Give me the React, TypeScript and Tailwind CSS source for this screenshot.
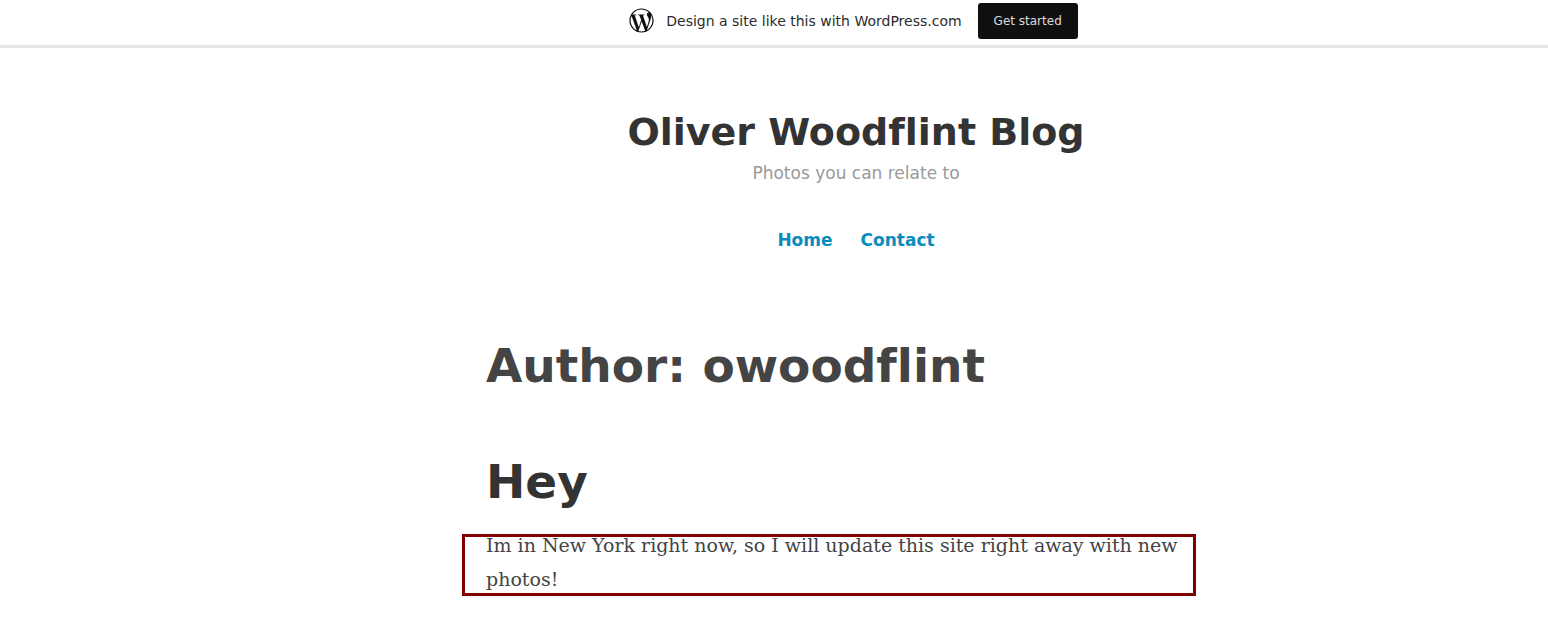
import { FaWordpressSimple } from "react-icons/fa";

export default function App() {
  return (
    <div className="min-h-screen bg-white font-['DejaVu_Sans',sans-serif] text-[#444] [font-variant-ligatures:none]">
      <aside className="flex h-12 items-center justify-center gap-4 border-b-3 border-[#e6e6e6] pb-1 pl-[159px] text-[#2b2b2b]">
        <span className="flex items-center gap-3 text-sm">
          <FaWordpressSimple className="size-[25px] text-[#101010]" />
          Design a site like this with WordPress.com
        </span>
        <a href="#start" className="flex h-9 items-center rounded-[3px] bg-[#101010] px-4 text-xs text-[#ddd]">Get started</a>
      </aside>
      <header className="flex flex-col items-center pt-15 pl-41">
        <h1 className="text-[38px] leading-12 font-bold text-[#333]">Oliver Woodflint Blog</h1>
        <p className="pt-1 text-[17px] leading-[26px] text-[#999]">Photos you can relate to</p>
        <nav className="flex gap-7 pt-[42px] text-[17px] leading-6 font-bold text-[#0a8cbe]">
          <a href="#home">Home</a>
          <a href="#contact">Contact</a>
        </nav>
      </header>
      <div className="flex justify-center pt-[86px] pl-[110px]">
        <main className="w-full max-w-[734px]">
          <h2 className="px-6 text-[47px] leading-14 font-bold">Author: owoodflint</h2>
          <article className="pt-15">
            <h3 className="px-6 text-[47px] leading-14 font-bold text-[#333]">Hey</h3>
            <div className="relative mt-[18px] pr-4 pl-6">
              <p className="font-['DejaVu_Serif',serif] text-[19px] leading-[34px]">
                Im in New York right now, so I will update this site right away with new photos!
              </p>
              <div aria-hidden="true" className="absolute inset-x-0 top-1.5 bottom-0 border-3 border-[#800000]" />
            </div>
          </article>
        </main>
      </div>
    </div>
  );
}
